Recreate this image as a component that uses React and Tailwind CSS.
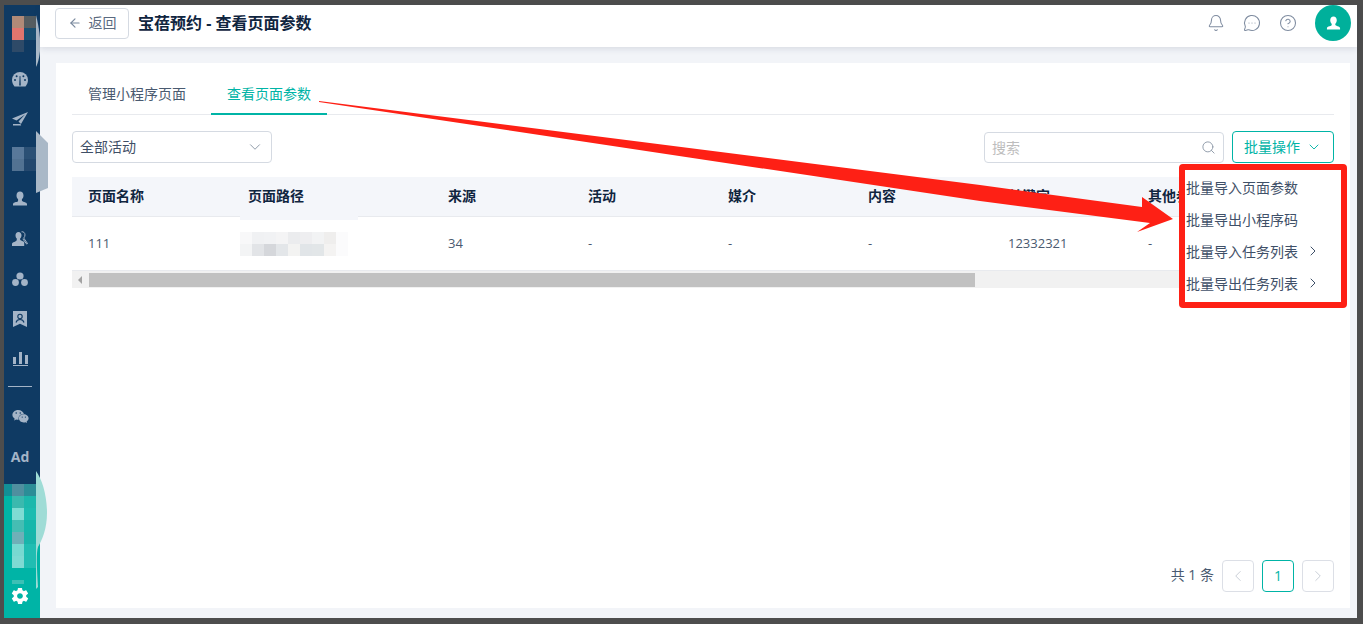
import React from 'react';
import { ArrowLeft, Bell, ChevronDown, ChevronLeft, ChevronRight, CircleHelp, MessageCircleMore, Search } from 'lucide-react';
import { FaWeixin } from 'react-icons/fa';
import { IoMdSettings } from 'react-icons/io';

const iconFill = '#a4b4c7';

const UserIcon = ({ size = 16, fill = iconFill }) => (
  <svg width={size} height={size} viewBox="0 0 16 16" fill={fill}>
    <path d="M8 .5c2.100 0 3.500 1.600 3.500 3.900 0 1.600-.7 3-1.600 3.800v1.200c0 .5 1 1 2.400 1.500 1.500.5 2.700 1 2.700 2.200v1.400H1v-1.400c0-1.200 1.200-1.700 2.700-2.200C5.100 10.900 6.100 10.400 6.100 9.400V8.200C5.200 7.400 4.500 6 4.500 4.400 4.500 2.100 5.900.5 8 .5z" />
  </svg>
);

const navIcons = [
  <svg key="gauge" width="16" height="15" viewBox="0 0 16 15" fill={iconFill}>
    <path d="M8 0a8 8 0 0 0-8 8c0 2.500 1 4.800 2.500 6.500h11C15 12.800 16 10.500 16 8a8 8 0 0 0-8-8z" />
    <path d="M7.200 13.500 7.600 4h.8l.4 9.500z" fill="#0f3a63" />
    <circle cx="3" cy="8" r="1" fill="#0f3a63" />
    <circle cx="4.600" cy="4.300" r="1" fill="#0f3a63" />
    <circle cx="11.400" cy="4.300" r="1" fill="#0f3a63" />
    <circle cx="13" cy="8" r="1" fill="#0f3a63" />
  </svg>,
  <svg key="plane" width="16" height="14" viewBox="0 0 16 14" fill={iconFill}>
    <path d="M16 0 0 6.500l4.500 2L13 2.500 6.500 9.500l2.500 2.500z" />
    <path d="M1 12h7.500l.7 1.500H1z" />
  </svg>,
  null,
  <UserIcon key="user" />,
  <svg key="users" width="16" height="16" viewBox="0 0 16 16" fill={iconFill}>
    <path d="M6.500 1C8.300 1 9.500 2.400 9.500 4.300c0 1.400-.6 2.600-1.400 3.300v1c0 .5.800.9 2 1.300.9.300 1.700.6 2.100 1.200V15H0v-2c0-1 1-1.500 2.300-1.900C3.600 10.600 4.800 10 4.800 8.600v-1C4 6.900 3.500 5.700 3.500 4.300 3.500 2.400 4.700 1 6.500 1z" />
    <path d="M9.500.8c1.900-.4 3.500 1 3.500 3.100 0 1.300-.5 2.400-1.300 3.100l3.800 5.500-.8.600-3.900-5.300" fill="none" stroke={iconFill} strokeWidth="1" />
  </svg>,
  <svg key="group" width="16" height="14" viewBox="0 0 16 14" fill={iconFill}>
    <circle cx="8" cy="4" r="3.600" />
    <circle cx="3.500" cy="10.500" r="3.400" />
    <circle cx="12.500" cy="10.500" r="3.400" />
  </svg>,
  <svg key="badge" width="14" height="16" viewBox="0 0 14 16" fill={iconFill}>
    <path d="M0 0h14v16l-7-3.200L0 16z" />
    <circle cx="7" cy="5.500" r="2.200" fill="none" stroke="#0f3a63" strokeWidth="1.100" />
    <path d="M3 11.500c.5-2 2-3 4-3s3.500 1 4 3" fill="none" stroke="#0f3a63" strokeWidth="1.100" />
  </svg>,
  <svg key="chart" width="15" height="14" viewBox="0 0 15 14" fill={iconFill}>
    <path d="M0 5h3v7H0zM6 0h3v12H6zM12 3h3v9h-3zM0 13h15v1H0z" />
  </svg>,
];

const topLogo = ['bg-[#b08a78]', 'bg-[#555c60]', 'bg-[#e0756e]', 'bg-[#1a4f72]', 'bg-[#2e4a68]', 'bg-[#0f3a62]'];
const navMosaic = ['bg-[#58789a]', 'bg-[#2b5075]', 'bg-[#527292]', 'bg-[#24486e]'];
const tealMosaic = [
  'bg-[#3bb9ae]', 'bg-[#1cb8ac]',
  'bg-[#7fdcd3]', 'bg-[#1cbcb0]',
  'bg-[#45bdb3]', 'bg-[#15b7ab]',
  'bg-[#6fb0b8]', 'bg-[#18b5aa]',
  'bg-[#78d9d1]', 'bg-[#20bdb2]',
  'bg-[#7edad3]', 'bg-[#20bdb2]',
];
const pathMosaic = [
  'bg-[#f8f8f9]', 'bg-[#f0f1f3]', 'bg-[#f1f2f4]', 'bg-[#f4f4f5]', 'bg-[#ebecee]', 'bg-[#eeeef0]', 'bg-[#f2f3f4]', 'bg-[#efeeed]', 'bg-[#fbfbfc]',
  'bg-[#f3f4f5]', 'bg-[#e2e4e7]', 'bg-[#d5d7db]', 'bg-[#e3e6e9]', 'bg-[#f3f3f2]', 'bg-[#e1e5e8]', 'bg-[#e2e6e8]', 'bg-[#f4f3f2]', 'bg-[#fbfbfc]',
];

const columns = [
  { label: '页面名称', width: 'w-[160px]', value: '111' },
  { label: '页面路径', width: 'w-[200px]', value: null },
  { label: '来源', width: 'w-[140px]', value: '34' },
  { label: '活动', width: 'w-[140px]', value: '-' },
  { label: '媒介', width: 'w-[140px]', value: '-' },
  { label: '内容', width: 'w-[140px]', value: '-' },
  { label: '关键字', width: 'w-[140px]', value: '12332321' },
  { label: '其他参数', width: 'w-[140px]', value: '-' },
];

const menuItems = [
  { label: '批量导入页面参数' },
  { label: '批量导出小程序码' },
  { label: '批量导入任务列表', more: true },
  { label: '批量导出任务列表', more: true },
];

const Sidebar = () => (
  <aside className="flex w-[36px] shrink-0 flex-col bg-[#0f3a63]">
    <div className="h-[54px] shrink-0 pl-[8px] pt-[11px]">
      <div className="grid w-[24px] grid-cols-2">
        {topLogo.map((c, i) => (
          <div key={i} className={`h-[12px] ${c}`} />
        ))}
      </div>
    </div>
    {navIcons.map((icon, i) => (
      <div key={i} className="flex h-[40px] shrink-0 items-center justify-center pr-[4px]">
        {icon || (
          <div className="ml-[8px] grid w-[24px] grid-cols-2">
            {navMosaic.map((c, j) => (
              <div key={j} className={`h-[12px] ${c}`} />
            ))}
          </div>
        )}
      </div>
    ))}
    <div className="mb-[9px] ml-[4px] mr-[8px] mt-[7px] h-px shrink-0 bg-[#a4b4c7]" />
    <div className="flex h-[40px] shrink-0 items-center justify-center pr-[4px]">
      <FaWeixin size={17} color={iconFill} />
    </div>
    <div className="flex h-[40px] shrink-0 items-center justify-center pr-[4px] text-[14px] font-bold text-[#a4b4c7]">Ad</div>
    <div className="mt-[8px] flex flex-1 flex-col bg-[#00b4a6]">
      <div className="h-[12px] bg-[#128f96] pl-[8px]">
        <div className="grid w-[24px] grid-cols-2">
          <div className="h-[12px] bg-[#4f8f9f]" />
          <div className="h-[12px] bg-[#2b8e97]" />
        </div>
      </div>
      <div className="ml-[8px] grid w-[24px] grid-cols-2">
        {tealMosaic.map((c, i) => (
          <div key={i} className={`h-[12px] ${c}`} />
        ))}
      </div>
      <div className="ml-[8px] mt-[12px] h-[4px] w-[12px] bg-[#3cc0b5]" />
      <div className="mb-[10px] mt-auto flex h-[24px] items-center justify-center pr-[4px]">
        <IoMdSettings size={20} color="#fff" />
      </div>
    </div>
  </aside>
);

const Header = () => (
  <header className="z-10 flex h-[42px] shrink-0 items-center bg-white pb-[6px] pl-[15px] pr-[6px] shadow-[0_2px_6px_rgba(30,50,80,0.12)]">
    <button className="flex h-[31px] w-[74px] items-center justify-center gap-[7px] rounded-[4px] border border-[#d5dae2] pb-px text-[14px] text-[#5a6a80]">
      <ArrowLeft size={14} color="#7b8a9e" />
      返回
    </button>
    <h1 className="ml-[9px] text-[16px] font-bold text-[#10253f]">宝蓓预约 - 查看页面参数</h1>
    <div className="ml-auto flex items-center text-[#7f8ca0]">
      <Bell size={18} strokeWidth={1.4} />
      <MessageCircleMore size={18} strokeWidth={1.4} className="ml-[18px]" />
      <CircleHelp size={18} strokeWidth={1.4} className="ml-[18px]" />
      <div className="ml-[18px] flex h-[36px] w-[36px] items-center justify-center rounded-full bg-[#00b09b]">
        <UserIcon size={15} fill="#fff" />
      </div>
    </div>
  </header>
);

const Toolbar = () => (
  <div className="mt-[16px] flex h-[32px] items-center">
    <div className="flex h-[32px] w-[200px] items-center justify-between rounded-[4px] border border-[#d5dae2] pl-[7px] pr-[7px] text-[14px] text-[#3f4f66]">
      <span className="mb-[2px]">全部活动</span>
      <ChevronDown size={18} strokeWidth={1.3} color="#8d99a8" />
    </div>
    <div className="ml-auto flex h-[31px] w-[240px] items-center justify-between rounded-[4px] border border-[#d5dae2] pl-[7px] pr-[7px] text-[14px] text-[#bdbdbd]">
      搜索
      <Search size={15} strokeWidth={1.5} color="#8d99a8" />
    </div>
    <button className="ml-[8px] flex h-[32px] w-[102px] items-center justify-center gap-[6px] rounded-[4px] border border-[#00b4a6] text-[14px] text-[#00b4a6]">
      <span className="mb-[2px]">批量操作</span>
      <ChevronDown size={16} strokeWidth={1.4} />
    </button>
  </div>
);

const Table = () => (
  <div className="mt-[14px] overflow-hidden">
    <div className="flex h-[40px] w-max items-center border-b border-[#e8eaee] bg-[#f4f6fa] pb-[2px] text-[14px] font-bold text-[#10253f]">
      {columns.map((col) => (
        <div key={col.label} className={`${col.width} shrink-0 pl-[16px]`}>
          {col.label}
        </div>
      ))}
    </div>
    <div className="flex h-[54px] w-max items-center border-b border-[#e8eaee] text-[13px] text-[#4a5a70]">
      {columns.map((col) => (
        <div key={col.label} className={`${col.width} shrink-0 pl-[16px]`}>
          {col.value ?? (
            <div className="-ml-[8px] grid w-[108px] grid-cols-9">
              {pathMosaic.map((c, i) => (
                <div key={i} className={`h-[12px] ${c}`} />
              ))}
            </div>
          )}
        </div>
      ))}
    </div>
    <div className="flex h-[17px] items-center bg-[#f1f1f1] pl-[6px]">
      <div className="h-0 w-0 border-y-[4px] border-r-[4px] border-y-transparent border-r-[#a3a3a3]" />
      <div className="ml-[7px] h-[14px] w-[886px] bg-[#c1c1c1]" />
    </div>
  </div>
);

const Pagination = () => (
  <div className="mt-auto flex items-center justify-end pb-[16px] text-[14px] text-[#4a5a70]">
    <span className="mb-[3px]">共 1 条</span>
    <div className="ml-[8px] flex h-[32px] w-[32px] items-center justify-center rounded-[4px] border border-[#dcdfe6]">
      <ChevronLeft size={18} strokeWidth={1.3} color="#c9ced6" />
    </div>
    <div className="ml-[8px] flex h-[32px] w-[32px] items-center justify-center rounded-[4px] border border-[#00b4a6] pb-[2px] text-[#00b4a6]">1</div>
    <div className="ml-[8px] flex h-[32px] w-[32px] items-center justify-center rounded-[4px] border border-[#dcdfe6]">
      <ChevronRight size={18} strokeWidth={1.3} color="#c9ced6" />
    </div>
  </div>
);

const App = () => (
  <div className="relative h-[624px] w-[1363px] overflow-hidden bg-[#4d4d4d] pb-[6px] pl-[4px] pr-[6px] pt-[5px] font-['Open_Sans','Noto_Sans_CJK_SC',sans-serif]">
    <div className="flex h-full">
      <Sidebar />
      <div className="flex min-w-0 flex-1 flex-col bg-[#f2f4f8]">
        <Header />
        <main className="flex-1 pb-[10px] pl-[16px] pr-[7px] pt-[16px]">
          <div className="flex h-full flex-col bg-white px-[16px] pt-[8px]">
            <div className="flex h-[44px] border-b border-[#e8eaee] pt-[2px] text-[14px]">
              <div className="flex w-[139px] items-center pl-[16px] text-[#4a5a70]">管理小程序页面</div>
              <div className="-mb-px flex w-[116px] items-center justify-center border-b-2 border-[#00b4a6] text-[#00b4a6]">查看页面参数</div>
            </div>
            <Toolbar />
            <Table />
            <Pagination />
          </div>
        </main>
      </div>
    </div>

    {/* smudge left by the blur over the table's header border */}
    <div className="absolute left-[240px] top-[216px] h-[4px] w-[118px] bg-[#f4f6fa]" />

    {/* translucent smears that spill off the sidebar */}
    <svg className="pointer-events-none absolute left-[36px] top-[15px]" width="12" height="600" viewBox="0 0 12 600">
      <path d="M0 0c3 12 5 25 4 36-1 8-2 12-4 16z" fill="#dfe4ea" opacity="0.75" />
      <path d="M0 116 12 128v45L0 178z" fill="#a9b8c7" />
      <path d="M0 456c6 8 11 24 11 42 0 16-5 27-9 34-2 6-1 24 0 40l-2 2z" fill="#9fdcd6" />
    </svg>

    {/* dropdown menu with the red annotation box round it */}
    <div className="absolute left-[1179px] top-[164px] h-[144px] w-[168px] rounded-[4px] border-[6px] border-[#fe2015] bg-white">
      <ul className="pt-px text-[14px] text-[#3f5068]">
        {menuItems.map((item) => (
          <li key={item.label} className="flex h-[32px] items-center pl-px">
            {item.label}
            {item.more && <ChevronRight size={16} strokeWidth={1.5} className="ml-[7px]" />}
          </li>
        ))}
      </ul>
    </div>

    {/* red annotation arrow */}
    <svg className="pointer-events-none absolute left-0 top-0" width="1363" height="624" viewBox="0 0 1363 624">
      <polygon points="319,101 980,185 1142,207 1142,197 1173,219 1137,232 1150,223 980,201 319,102" fill="#fe2015" />
    </svg>
  </div>
);

export default App;
